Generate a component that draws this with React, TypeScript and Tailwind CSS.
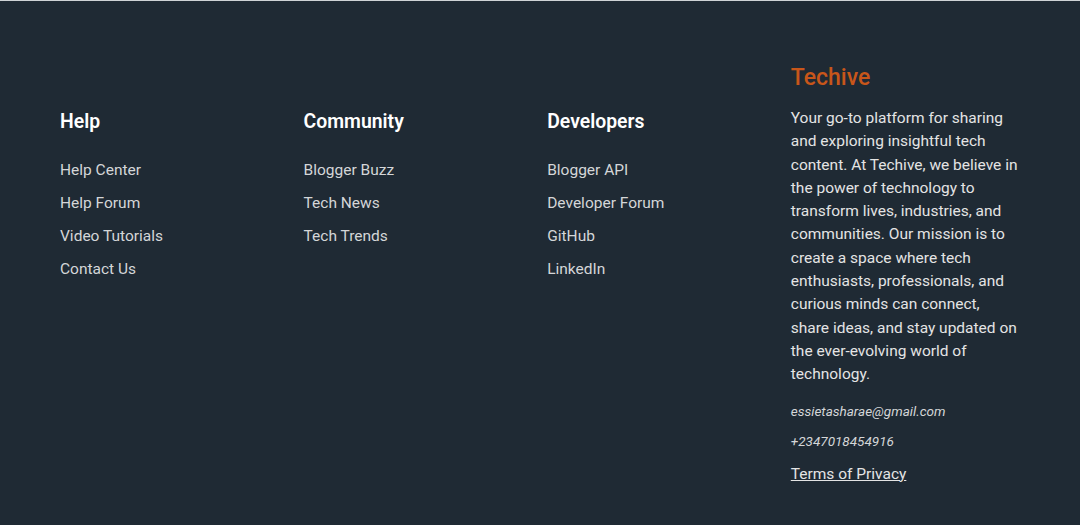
import React from "react";

const cols = [
  { title: "Help", links: ["Help Center", "Help Forum", "Video Tutorials", "Contact Us"] },
  { title: "Community", links: ["Blogger Buzz", "Tech News", "Tech Trends"] },
  { title: "Developers", links: ["Blogger API", "Developer Forum", "GitHub", "LinkedIn"] },
];

export default function App() {
  return (
    <div
      className="w-[1080px] h-[525px] bg-[#1f2a34] border-t border-[#cfd3d6] overflow-hidden"
      style={{ fontFamily: "Roboto, 'Noto Sans', sans-serif" }}
    >
      <div className="grid grid-cols-[243.6px_243.6px_243.6px_240px] pl-[60px] pt-[62px]">
        {cols.map((c) => (
          <div key={c.title} className="pt-[47px]">
            <h3 className="text-[19.4px] leading-[24px] font-semibold text-white">{c.title}</h3>
            <ul className="mt-[24px] flex flex-col gap-[9px]">
              {c.links.map((l) => (
                <li key={l} className="text-[15.5px] leading-[24px] text-[#d4d6d8]">
                  {l}
                </li>
              ))}
            </ul>
          </div>
        ))}
        <div>
          <h2 className="text-[23px] leading-[30px] font-medium text-[#c8561a]">Techive</h2>
          <p className="mt-[14px] text-[15.5px] leading-[23.3px] text-[#e4e4e4] w-[229px]">
            Your go-to platform for sharing and exploring insightful tech content. At Techive, we believe in the power of technology to transform lives, industries, and communities. Our mission is to create a space where tech enthusiasts, professionals, and curious minds can connect, share ideas, and stay updated on the ever-evolving world of technology.
          </p>
          <p className="mt-[14px] text-[13.5px] leading-[20px] italic text-[#d4d6d8]">essietasharae@gmail.com</p>
          <p className="mt-[10px] text-[13.5px] leading-[20px] italic text-[#d4d6d8]">+2347018454916</p>
          <a className="block mt-[11px] text-[15.5px] leading-[24px] text-[#e4e4e4] underline">Terms of Privacy</a>
        </div>
      </div>
    </div>
  );
}
